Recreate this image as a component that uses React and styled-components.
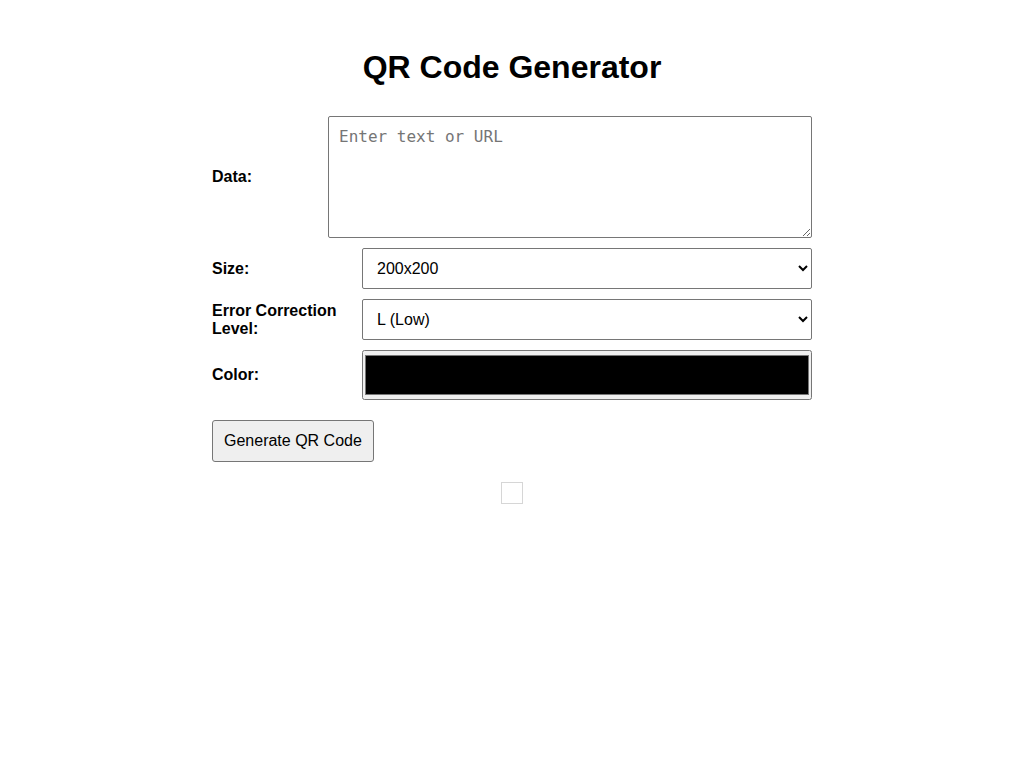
import React from "react";
import styled, { createGlobalStyle } from "styled-components";

const Global = createGlobalStyle`
  body {
    margin: 8px;
    background: #ffffff;
    font-family: "Liberation Sans", Arial, sans-serif;
    color: #000;
  }
`;

const Container = styled.div`
  width: 600px;
  margin: 0 auto;
  padding-top: 20px;
`;

const Title = styled.h1`
  font-size: 32px;
  font-weight: bold;
  text-align: center;
  margin: 21px 0 30px;
  line-height: 37px;
`;

const Form = styled.form`
  display: flex;
  flex-direction: column;
  gap: 10px;
`;

const Row = styled.div`
  display: flex;
  align-items: center;
`;

const Label = styled.label`
  flex: 0 0 ${(p) => p.$w}px;
  font-weight: bold;
  font-size: 16px;
  line-height: 18px;
`;

const TextArea = styled.textarea`
  flex: 1;
  box-sizing: border-box;
  height: 122px;
  padding: 10px;
  font-family: "DejaVu Sans Mono", monospace;
  font-size: 16px;
  border: 1px solid #767676;
  border-radius: 2px;
  &::placeholder {
    color: #757575;
  }
`;

const Select = styled.select`
  flex: 1;
  box-sizing: border-box;
  height: 41px;
  padding: 0 10px;
  font-family: "Liberation Sans", Arial, sans-serif;
  font-size: 16px;
  border: 1px solid #767676;
  border-radius: 2px;
  background: #fff;
  color: #000;
`;

const ColorInput = styled.input`
  flex: 1;
  box-sizing: border-box;
  height: 50px;
  margin: 0;
  padding: 0;
`;

const ButtonRow = styled.div`
  margin-top: 10px;
`;

const Button = styled.button`
  font-family: "Liberation Sans", Arial, sans-serif;
  font-size: 16px;
  padding: 10px 11px;
  height: 42px;
  background: #efefef;
  border: 1px solid #767676;
  border-radius: 3px;
  color: #000;
`;

const Result = styled.div`
  display: flex;
  justify-content: center;
  margin-top: 20px;
`;

const Placeholder = styled.div`
  width: 22px;
  height: 22px;
  box-sizing: border-box;
  border: 1px solid #d6d6d6;
`;

export default function App() {
  return (
    <>
      <Global />
      <Container>
        <Title>QR Code Generator</Title>
        <Form onSubmit={(e) => e.preventDefault()}>
          <Row>
            <Label $w={116}>Data:</Label>
            <TextArea placeholder="Enter text or URL" />
          </Row>
          <Row>
            <Label $w={150}>Size:</Label>
            <Select defaultValue="200x200">
              <option>100x100</option>
              <option>200x200</option>
              <option>300x300</option>
            </Select>
          </Row>
          <Row>
            <Label $w={150}>Error Correction Level:</Label>
            <Select defaultValue="L">
              <option value="L">L (Low)</option>
              <option value="M">M (Medium)</option>
              <option value="Q">Q (Quartile)</option>
              <option value="H">H (High)</option>
            </Select>
          </Row>
          <Row>
            <Label $w={150}>Color:</Label>
            <ColorInput type="color" defaultValue="#000000" />
          </Row>
          <ButtonRow>
            <Button type="submit">Generate QR Code</Button>
          </ButtonRow>
        </Form>
        <Result>
          <Placeholder />
        </Result>
      </Container>
    </>
  );
}
